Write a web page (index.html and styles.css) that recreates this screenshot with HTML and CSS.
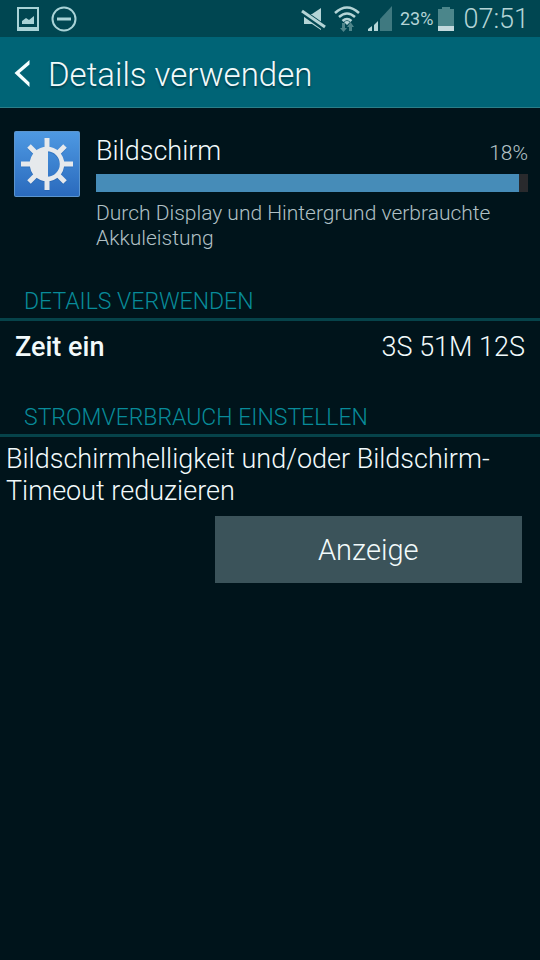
FILE: index.html
```html
<!DOCTYPE html>
<html lang="de">
<head>
<meta charset="utf-8">
<meta name="viewport" content="width=device-width, initial-scale=1">
<title>Details verwenden</title>
<link rel="stylesheet" href="styles.css">
</head>
<body>
<div class="status">
  <div class="status-group notices">
    <svg width="22" height="24" viewBox="0 0 22 24" aria-hidden="true"><path fill="#a9d3d7" fill-rule="evenodd" d="M0 0H22V24H0ZM2 2V20H20V2Z"/><path fill="#a9d3d7" d="M5 17V14L9 11L12 13L17 9V17Z"/></svg>
    <svg width="26" height="26" viewBox="0 0 26 26" aria-hidden="true"><circle cx="13" cy="13" r="11.5" fill="none" stroke="#a9d3d7" stroke-width="2"/><path fill="#a9d3d7" d="M6 11.500H20V14.500H6Z"/></svg>
  </div>
  <div class="status-group signals">
    <svg width="25" height="24" viewBox="0 0 25 24" aria-hidden="true"><path fill="#b4d4d6" d="M3 7H11L20 1V23L11 17H3Z"/><path d="M0 4L24 21" stroke="#004651" stroke-width="6"/><path d="M1 4L24 20" stroke="#b4d4d6" stroke-width="3"/></svg>
    <svg width="26" height="28" viewBox="0 0 26 28" aria-hidden="true"><g fill="none" stroke="#b4d4d6" stroke-width="2.5"><path d="M1 8Q13 -3 25 8"/><path d="M5 12Q13 5 21 12"/><path d="M8.500 16Q13 12 17.500 16"/></g><path fill="#b4d4d6" d="M10 17Q13 15 16 17L13 20Z"/><g fill="#4f858a"><path d="M8 18H11V23H13L9.500 27L6 23H8Z"/><path d="M15 26V22H13L16.500 17L20 22H18V26Z"/></g></svg>
    <svg width="24" height="25" viewBox="0 0 24 25" aria-hidden="true"><path fill="#3f7980" d="M12 13L24 0V25H12Z"/><path fill="#b4d4d6" d="M0 25V23L4 20V25ZM6 25V19L10 15V25Z"/></svg>
    <span class="charge">23%</span>
    <svg width="18" height="24" viewBox="0 0 18 24" aria-hidden="true"><path fill="#4b868b" d="M5 0H13V2H17V19H1V2H5Z"/><path fill="#c4d9dd" d="M1 19H17V24H1Z"/></svg>
    <time class="clock">07:51</time>
  </div>
</div>
<header class="appbar">
  <a class="back" href="#" aria-label="Zurück"><svg width="17" height="29" viewBox="0 0 17 29" aria-hidden="true"><path fill="#f4ffff" d="M15.500 1V5.500L5.500 14L15.500 23.500V28L0.500 14Z"/></svg></a>
  <h1>Details verwenden</h1>
</header>
<main>
  <section class="usage">
    <svg class="usage-icon" width="66" height="66" viewBox="0 0 66 66" aria-hidden="true">
      <defs><linearGradient id="tile" x2="0" y2="1"><stop offset="0" stop-color="#4e99e2"/><stop offset="1" stop-color="#2a6abd"/></linearGradient></defs>
      <rect width="66" height="66" rx="2" fill="#5b95cf"/><rect x="1" y="1" width="64" height="64" rx="1" fill="url(#tile)"/>
      <g transform="translate(33 34)" fill="none" stroke="#205aa0" stroke-opacity=".35" stroke-width="5"><circle r="15"/><path d="M0-25V-15M0 15V26M-26 0H-15M15 0H26M-18-18L-11-11M11 11L18 18M-18 18L-11 11M11-11L18-18"/></g>
      <g transform="translate(33 33)" fill="none" stroke="#e6e9ec" stroke-width="5"><circle r="15" stroke-width="4.500"/><path d="M0-26V-15M0 15V26M-26 0H-15M15 0H26M-18-18L-11-11M11 11L18 18M-18 18L-11 11M11-11L18-18"/><path fill="#e6e9ec" stroke="none" d="M1-16V16H0A16 16 0 0 1 0-16Z"/></g>
    </svg>
    <div class="usage-body">
      <div class="usage-head"><h2>Bildschirm</h2><span class="percent">18%</span></div>
      <div class="bar"><div class="bar-fill"></div></div>
      <p class="note">Durch Display und Hintergrund verbrauchte Akkuleistung</p>
    </div>
  </section>
  <section>
    <h3>DETAILS VERWENDEN</h3>
    <dl class="row"><dt>Zeit ein</dt><dd>3S 51M 12S</dd></dl>
  </section>
  <section>
    <h3>STROMVERBRAUCH EINSTELLEN</h3>
    <p class="hint">Bildschirmhelligkeit und/oder Bildschirm-Timeout reduzieren</p>
    <div class="actions"><button type="button">Anzeige</button></div>
  </section>
</main>
</body>
</html>
```
FILE: styles.css
```css
* { box-sizing: border-box; }

body {
  margin: 0;
  min-height: 100vh;
  background: #00141b;
  color: #f2fafb;
  font-family: Roboto, "Liberation Sans", sans-serif;
  font-weight: 300;
}

h1, h2, h3, p, dl, dd { margin: 0; font-weight: 300; }
svg { display: block; flex: none; }

.status {
  display: flex;
  justify-content: space-between;
  height: 37px;
  padding: 0 11px 0 17px;
  background: #004651;
}

.status-group { display: flex; align-items: center; }
.notices { gap: 12px; }
.signals { gap: 8px; color: #b4d4d6; }
.charge { font-size: 18px; font-weight: 400; }
.clock { font-size: 27px; }
.charge + svg { margin-left: -4px; }

.appbar {
  display: flex;
  align-items: center;
  gap: 17px;
  height: 71px;
  padding: 2px 14px 0;
  background: #006476;
  border-bottom: 1px solid #2b7e88;
}

.back { display: block; }

h1 {
  padding-top: 4px;
  font-size: 33px;
  line-height: 40px;
  text-shadow: 0 2px 2px #003c48;
}

.usage {
  display: flex;
  gap: 16px;
  padding: 23px 12px 37px 14px;
}

.usage-body { flex: 1; }

.usage-head {
  display: flex;
  justify-content: space-between;
  align-items: baseline;
  height: 43px;
  padding-top: 4px;
}

h2 { font-size: 27px; line-height: 32px; }
.percent { font-size: 21px; color: #b4c3c7; }
.bar { height: 18px; background: #292a2d; }
.bar-fill { width: 98%; height: 100%; background: #468cb8; }

.note {
  margin-top: 9px;
  color: #b0c0c5;
  font-size: 21px;
  line-height: 25px;
}

h3 {
  padding: 0 24px 2px;
  border-bottom: 3px solid #06434a;
  color: #088b99;
  font-size: 23px;
  line-height: 28px;
}

.row {
  display: flex;
  justify-content: space-between;
  padding: 10px 15px 41px;
  font-size: 27px;
  line-height: 32px;
}

dt { font-weight: 500; }

.hint {
  padding: 6px 6px 0;
  font-size: 27px;
  line-height: 32px;
}

.actions {
  display: flex;
  justify-content: flex-end;
  padding: 9px 18px;
}

button {
  width: 61%;
  padding: 18px 0 17px;
  border: 0;
  background: #3b535a;
  color: #f2fafb;
  font: 300 29px/32px Roboto, "Liberation Sans", sans-serif;
}
```
